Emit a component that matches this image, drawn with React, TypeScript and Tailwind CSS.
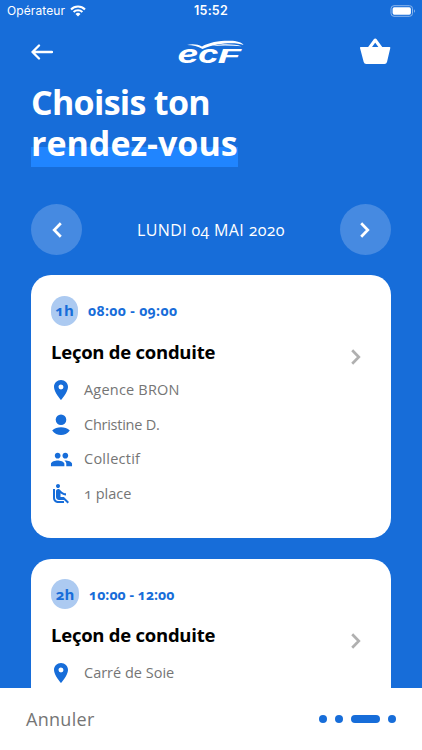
import type { ReactNode } from 'react';
import { MdPeople, MdAirlineSeatReclineNormal, MdLocationOn } from 'react-icons/md';

function Chevron({ flip = false, className }: { flip?: boolean; className: string }) {
  return (
    <svg viewBox="0 0 10 16" className={className} fill="none" stroke="currentColor" strokeWidth="2.7">
      <path d={flip ? 'M8.8 1.2 2.2 8l6.6 6.8' : 'M1.2 1.2 7.8 8l-6.6 6.8'} />
    </svg>
  );
}

function Logo() {
  return (
    <svg viewBox="172 33 78 40" className="mt-1 h-10 w-[78px]" fill="white">
      <path d="M187 43.900C193 42.600 198 43.400 202 45.600 209 41.200 220 39.600 230 39.800 237 40 242 41.200 243.500 44 236 41.400 219 41.200 202.500 48 198 44.900 193 43.900 187 43.900Z" />
      <path d="M212 45C222 42.500 234 42.900 241.500 45.200 232 44.300 222 44 212 45Z" />
      <g fontFamily="Inter, sans-serif" fontWeight="700" fontStyle="italic">
        <text x="177.500" y="62" fontSize="24.500" textLength="21" lengthAdjust="spacingAndGlyphs">e</text>
        <text x="198" y="62" fontSize="24.500" textLength="20.500" lengthAdjust="spacingAndGlyphs">c</text>
        <text x="217.500" y="62" fontSize="18.500" textLength="23" lengthAdjust="spacingAndGlyphs">F</text>
      </g>
    </svg>
  );
}

function Detail({ icon, tracking, children }: { icon: ReactNode; tracking: string; children: ReactNode }) {
  return (
    <div className="flex h-[34.7px] items-center gap-[13px] text-[#757575]">
      <span className="flex w-5 shrink-0 justify-center text-[#176dd9]">{icon}</span>
      <span className={`whitespace-nowrap text-[14.500px] font-medium ${tracking}`}>{children}</span>
    </div>
  );
}

function Card({ length, time, badge, tracking, children }: { length: string; time: string; badge: string; tracking: string; children: ReactNode }) {
  return (
    <section className="flex h-[263px] shrink-0 justify-between rounded-[20px] bg-white pl-5 pr-[30px] pt-[20.500px]">
      <div>
        <div className="flex items-center gap-[10px] font-bold text-[#176dd9]">
          <span className={`flex h-[30px] items-center justify-center rounded-[15px] bg-[#accaf1] text-[15px] ${badge}`}>{length}</span>
          <span className={`text-[14px] ${tracking}`}>{time}</span>
        </div>
        <h2 className="mt-3 h-[27px] whitespace-nowrap text-[18.500px] font-bold leading-[27px] tracking-[-0.25px] text-black">Leçon de conduite</h2>
        <div className="mt-2">{children}</div>
      </div>
      <Chevron className="mt-[53.500px] h-4 w-[10px] text-[#b0b0b0]" />
    </section>
  );
}

const pin = <MdLocationOn className="size-6 shrink-0" />;

export default function App() {
  return (
    <main className="flex h-[750px] w-[422px] flex-col overflow-hidden bg-[#176dd9] font-['Open_Sans',sans-serif] oldstyle-nums">
      <div className="grid h-[21px] shrink-0 grid-cols-3 items-center pl-[6px] pr-[6px] font-['Inter',sans-serif] text-[12px] text-white lining-nums">
        <div className="flex items-center gap-[5px] pl-px">
          <span className="tracking-[0.1px]">Opérateur</span>
          <svg viewBox="0 0 16 12" className="h-3 w-4" fill="none" stroke="white" strokeWidth="2.100">
            <path d="M1 4.400a10 10 0 0 1 14 0M3.600 7a6.300 6.300 0 0 1 8.800 0" />
            <path d="m8 11.500-2.500-2.600a3.600 3.600 0 0 1 5 0Z" fill="white" stroke="none" />
          </svg>
        </div>
        <span className="pt-0.5 text-center text-[12.500px] font-semibold tracking-[0.2px]">15:52</span>
        <svg viewBox="0 0 26 12" className="h-3 w-[26px] justify-self-end">
          <rect x="1" y=".7" width="21.500" height="10.600" rx="3" fill="none" stroke="#8bb6ec" />
          <rect x="2.600" y="2.300" width="18.300" height="7.400" rx="1.600" fill="white" />
          <path d="M24 4.200q2 1.800 0 3.600Z" fill="#8bb6ec" />
        </svg>
      </div>

      <header className="grid h-[61px] shrink-0 grid-cols-3 items-center px-[31px]">
        <svg viewBox="0 0 22 16" className="h-4 w-[22px]" fill="none" stroke="white" strokeWidth="2.300" strokeLinecap="round" strokeLinejoin="round">
          <path d="M21 8H1.500M8 1.500 1.500 8 8 14.500" />
        </svg>
        <div className="flex justify-center"><Logo /></div>
        <svg viewBox="0 0 32 28" className="h-7 w-8 justify-self-end">
          <path d="m10 10.500 6.200-8.500 6.200 8.500" fill="none" stroke="white" strokeWidth="3" strokeLinejoin="round" />
          <path d="M1.800 9h28.700q1 0 .8 1L28 24q-.5 2-2.500 2H7.200q-2 0-2.500-2L1 10q-.2-1 .8-1Z" fill="white" />
        </svg>
      </header>

      <h1 className="shrink-0 px-[31px] text-[34px] font-bold leading-[41px] text-white">
        <span className="block tracking-[-0.7px]">Choisis ton</span>
        <span className="block h-[44px] w-[207px] whitespace-nowrap bg-linear-to-b from-transparent from-[54%] to-[#2085ff] to-[54%]">rendez-vous</span>
      </h1>

      <div className="mt-[37px] flex shrink-0 items-center justify-between px-[31px] text-white">
        <button className="flex size-[51px] items-center justify-center rounded-full bg-[#468ae1]"><Chevron flip className="h-4 w-[10px]" /></button>
        <span className="text-[16px] font-medium tracking-[0.35px]">LUNDI 04 MAI 2020</span>
        <button className="flex size-[51px] items-center justify-center rounded-full bg-[#468ae1]"><Chevron className="h-4 w-[10px]" /></button>
      </div>

      <div className="mt-5 flex min-h-0 flex-1 flex-col gap-[20.500px] overflow-hidden px-[31px]">
        <Card length="1h" time="08:00 - 09:00" badge="w-[27px]" tracking="tracking-[0.38px]">
          <Detail icon={pin} tracking="tracking-[0.2px]">Agence BRON</Detail>
          <Detail
            tracking="tracking-[-0.25px]"
            icon={
              <svg viewBox="0 0 20 22" className="h-[22px] w-5" fill="currentColor">
                <circle cx="10" cy="5.800" r="5.300" />
                <path d="M1.200 16.500c4.500-4.300 13.100-4.300 17.600 0-4.200 6-13.400 6-17.600 0Z" />
              </svg>
            }
          >
            Christine D.
          </Detail>
          <Detail icon={<MdPeople className="size-[23px] shrink-0" />} tracking="tracking-[0.25px]">Collectif</Detail>
          <Detail icon={<MdAirlineSeatReclineNormal className="size-6 shrink-0" />} tracking="tracking-normal">1 place</Detail>
        </Card>
        <Card length="2h" time="10:00 - 12:00" badge="w-7" tracking="tracking-[0.08px]">
          <Detail icon={pin} tracking="tracking-normal">Carré de Soie</Detail>
        </Card>
      </div>

      <footer className="flex h-[62px] shrink-0 items-center justify-between bg-white pl-[26px] pr-[26px]">
        <span className="text-[18px] font-medium tracking-[0.3px] text-[#757575]">Annuler</span>
        <div className="flex gap-2">
          <i className="size-2 rounded-full bg-[#176dd9]" />
          <i className="size-2 rounded-full bg-[#176dd9]" />
          <i className="h-2 w-[29px] rounded-full bg-[#176dd9]" />
          <i className="size-2 rounded-full bg-[#176dd9]" />
        </div>
      </footer>
    </main>
  );
}
